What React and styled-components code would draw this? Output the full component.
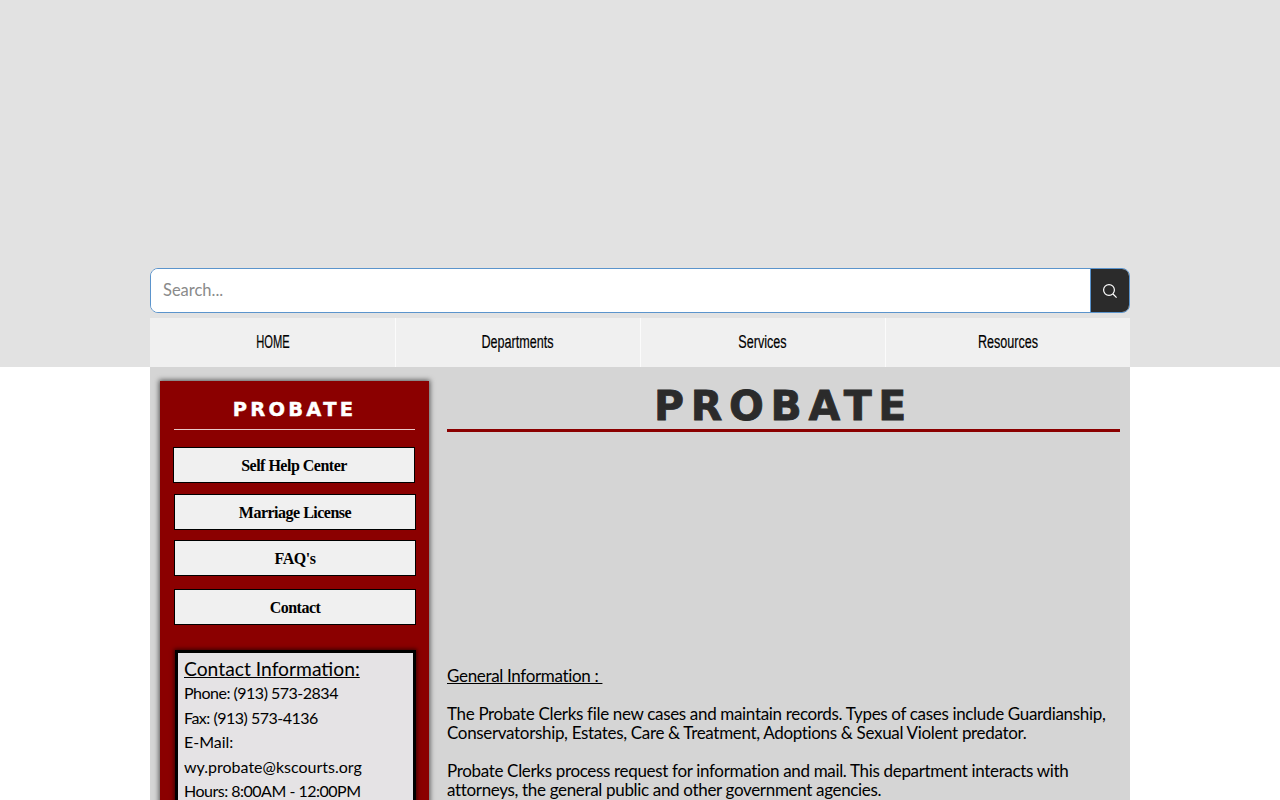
import styled, { createGlobalStyle } from "styled-components";

const GlobalStyle = createGlobalStyle`
  html, body {
    margin: 0;
    padding: 0;
    background: #fff;
  }
  #root {
    height: 800px;
    overflow: hidden;
  }
`;

const Header = styled.header`
  height: 367px;
  background: #e2e2e2;
  display: flex;
  flex-direction: column;
  align-items: center;
  justify-content: flex-end;
`;
const SearchBar = styled.form`
  width: 980px;
  height: 45px;
  margin-bottom: 5px;
  display: flex;
  box-sizing: border-box;
  background: #fff;
  border: 1px solid #5b94cc;
  border-radius: 8px;
  overflow: hidden;
`;
const SearchInput = styled.input`
  flex: 1;
  min-width: 0;
  border: 0;
  outline: 0;
  padding: 0 12px 2px;
  font-family: "Lato", "Liberation Sans", sans-serif;
  font-size: 16.5px;
  color: #333;
  &::placeholder {
    color: #8a8a8a;
  }
`;
const SearchButton = styled.button`
  width: 39px;
  padding: 0;
  border: 0;
  border-left: 1px solid #5b94cc;
  background: #2b2b2b;
  display: flex;
  align-items: center;
  justify-content: center;
`;
const Nav = styled.nav`
  width: 980px;
  height: 49px;
  display: flex;
`;
const NavItem = styled.a`
  width: 25%;
  padding-bottom: 1px;
  box-sizing: border-box;
  display: flex;
  align-items: center;
  justify-content: center;
  background: #f0f0f0;
  color: #000;
  & + & {
    border-left: 1px solid #fbfbfb;
  }
`;
const NavLabel = styled.span`
  display: inline-block;
  transform: scaleX(${(props) => props.$squeeze || 0.7});
  font-family: "Liberation Sans", sans-serif;
  font-size: 18px;
  -webkit-text-stroke: 0.2px #000;
`;

const Page = styled.div`
  width: 980px;
  height: 433px;
  margin: 0 auto;
  background: #d5d5d5;
  display: flex;
  overflow: hidden;
`;
const Sidebar = styled.aside`
  width: 269px;
  height: 480px;
  margin: 14px 0 0 10px;
  flex-shrink: 0;
  box-sizing: border-box;
  padding: 0 14px;
  background: #8b0000;
  box-shadow: 0 0 5px 1px rgba(0, 0, 0, 0.6);
`;
const SideTitle = styled.h2`
  margin: 0 0 17px;
  height: 49px;
  box-sizing: border-box;
  padding-top: 17px;
  border-bottom: 1px solid #e9c9c9;
  text-align: center;
  color: #fff;
  font-family: "DejaVu Sans", "Liberation Sans", sans-serif;
  font-weight: 700;
  font-size: 19.5px;
  line-height: 24px;
  letter-spacing: 3.2px;
  -webkit-text-stroke: 0.4px #fff;
`;
const SideButton = styled.a`
  display: flex;
  align-items: center;
  justify-content: center;
  width: 242px;
  height: 36px;
  padding-top: 1px;
  box-sizing: border-box;
  margin: ${(props) => props.$top || 0}px 0 0 ${(props) => props.$left || 0}px;
  background: #f0f0f0;
  border: 1px solid #000;
  color: #000;
  font-family: "Liberation Serif", serif;
  font-weight: 700;
  font-size: 16px;
  letter-spacing: -0.5px;
`;
const ContactBox = styled.div`
  width: 241px;
  margin: 25px 0 0 1px;
  box-sizing: border-box;
  padding: 4px 5px 8px 6px;
  background: #e5e3e5;
  border: 3px solid #000;
  box-shadow: 0 0 4px 1px rgba(0, 0, 0, 0.6);
  font-family: "Lato", "Liberation Sans", sans-serif;
  color: #000;
`;
const ContactTitle = styled.h3`
  margin: 0;
  font-weight: 400;
  font-size: 19.3px;
  line-height: 24px;
  text-decoration: underline;
`;
const ContactLine = styled.p`
  margin: 0;
  font-size: 16px;
  line-height: 24.5px;
  letter-spacing: ${(props) => (props.$numeric ? -0.5 : 0)}px;
`;

const Content = styled.main`
  flex: 1;
  min-width: 0;
  margin: 0 10px 0 18px;
  font-family: "Lato", "Liberation Sans", sans-serif;
  color: #000;
`;
const Title = styled.h1`
  margin: 0;
  height: 65px;
  box-sizing: border-box;
  padding-top: 14px;
  border-bottom: 3px solid #8b0000;
  text-align: center;
  color: #2b2b2b;
  font-family: "DejaVu Sans", "Liberation Sans", sans-serif;
  font-weight: 700;
  font-size: 41px;
  line-height: 50px;
  letter-spacing: 6.7px;
  -webkit-text-stroke: 0.8px #2b2b2b;
`;
const Body = styled.div`
  margin-top: 234px;
  font-size: 17px;
  line-height: 19px;
  letter-spacing: -0.33px;
`;
const SectionLabel = styled.p`
  margin: 0 0 19px;
  white-space: pre-wrap;
  text-decoration: underline;
`;
const Paragraph = styled.p`
  margin: 0 0 19px;
`;

const SearchIcon = () => (
  <svg width="16" height="16" viewBox="0 0 16 16" fill="none" stroke="#fff" strokeWidth="1.2">
    <circle cx="7" cy="7" r="5.4" />
    <path d="M11 11l3.6 3.6" />
  </svg>
);

const App = () => {
  return (
    <>
      <GlobalStyle />
      <Header>
        <SearchBar>
          <SearchInput placeholder="Search..." />
          <SearchButton type="button">
            <SearchIcon />
          </SearchButton>
        </SearchBar>
        <Nav>
          <NavItem><NavLabel $squeeze={0.62}>HOME</NavLabel></NavItem>
          <NavItem><NavLabel>Departments</NavLabel></NavItem>
          <NavItem><NavLabel>Services</NavLabel></NavItem>
          <NavItem><NavLabel>Resources</NavLabel></NavItem>
        </Nav>
      </Header>
      <Page>
        <Sidebar>
          <SideTitle>PROBATE</SideTitle>
          <SideButton $left={-1}>Self Help Center</SideButton>
          <SideButton $top={11}>Marriage License</SideButton>
          <SideButton $top={10}>FAQ's</SideButton>
          <SideButton $top={13}>Contact</SideButton>
          <ContactBox>
            <ContactTitle>Contact Information:</ContactTitle>
            <ContactLine $numeric>Phone: (913) 573-2834</ContactLine>
            <ContactLine $numeric>Fax: (913) 573-4136</ContactLine>
            <ContactLine>E-Mail:</ContactLine>
            <ContactLine>wy.probate@kscourts.org</ContactLine>
            <ContactLine $numeric>Hours: 8:00AM - 12:00PM</ContactLine>
          </ContactBox>
        </Sidebar>
        <Content>
          <Title>PROBATE</Title>
          <Body>
            <SectionLabel>{"General Information : "}</SectionLabel>
            <Paragraph>
              The Probate Clerks file new cases and maintain records. Types of cases include Guardianship,
              <br />
              Conservatorship, Estates, Care &amp; Treatment, Adoptions &amp; Sexual Violent predator.
            </Paragraph>
            <Paragraph>
              Probate Clerks process request for information and mail. This department interacts with
              <br />
              attorneys, the general public and other government agencies.
            </Paragraph>
          </Body>
        </Content>
      </Page>
    </>
  );
};

export default App;
